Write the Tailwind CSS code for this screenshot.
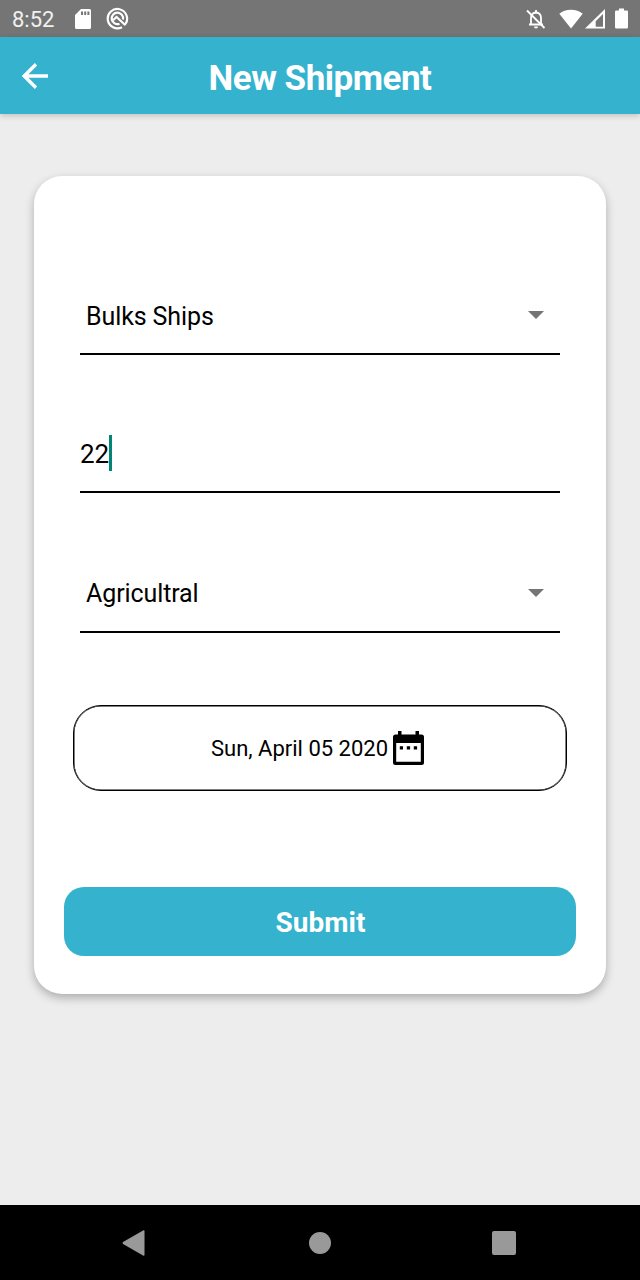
<!DOCTYPE html>
<html lang="en">
<head>
    <meta charset="UTF-8">
    <meta name="viewport" content="width=device-width, initial-scale=1.0">
    <title>New Shipment</title>
    <script src="https://cdn.jsdelivr.net/npm/@tailwindcss/browser@4"></script>
</head>
<body class="bg-[#ededed] font-[Roboto,sans-serif] text-black">

    <div class="flex flex-col w-[640px] h-[1280px] overflow-hidden">

        <!-- Status bar -->
        <div class="flex items-center justify-between h-[37px] shrink-0 bg-[#757575] pl-3 pr-3 text-white">
            <div class="flex items-center">
                <span class="w-[63px] text-[22px] leading-[37px] pt-[2px] text-white/90">8:52</span>
                <svg class="w-[16px] h-[20px] mr-[15px]" viewBox="0 0 16 20" fill="currentColor">
                    <path fill-rule="evenodd" d="M6 0h8.500Q16 0 16 1.500v17Q16 20 14.500 20h-13Q0 20 0 18.500V6zM6 2.500v3.500h2V2.500zm3.200 0v3.500h2V2.500zm3.200 0v3.500h2V2.500z"/>
                </svg>
                <svg class="w-[23px] h-[23px]" viewBox="0 0 23 23" fill="none" stroke="currentColor" stroke-width="2.200">
                    <path d="M16 20.200A9.700 9.700 0 1 1 19.500 17"/>
                    <path d="M13.500 16.700A5.700 5.700 0 1 1 17 12.500"/>
                    <path d="M7 13.200l3.500-3.200 9 8.300"/>
                </svg>
            </div>
            <div class="flex items-center">
                <svg class="w-[20px] h-[20px] mr-[13px]" viewBox="0 0 20 20" fill="none" stroke="currentColor" stroke-width="1.800">
                    <path d="M5 15V9q0-5 5-5.500q5 .5 5 5.500v6M3 15.500h14M10 1v3"/>
                    <path d="M8 17.500h4a2 2 0 0 1-4 0z" fill="currentColor" stroke="none"/>
                    <path d="M1 1.500l17.500 17.500"/>
                </svg>
                <svg class="w-[24px] h-[20px] mr-[2px]" viewBox="0 0 24 20" fill="currentColor">
                    <path d="M12 19.500L.3 4.800Q5 .8 12 .8t11.700 4z"/>
                </svg>
                <svg class="w-[20px] h-[20px] mr-[10px]" viewBox="0 0 20 20" fill="currentColor">
                    <path fill-rule="evenodd" d="M20 0v19.500H0zM18 5l-7.300 7.200v5.500H18z"/>
                </svg>
                <svg class="w-[13px] h-[21px]" viewBox="0 0 13 21" fill="currentColor">
                    <path d="M4 .500h5v2h2.800q1.200 0 1.200 1.200v15.500q0 1.300-1.200 1.300H1.200Q0 20.500 0 19.200V3.700Q0 2.500 1.200 2.500H4z"/>
                </svg>
            </div>
        </div>

        <!-- App bar -->
        <div class="grid grid-cols-[80px_1fr_80px] items-center h-[77px] shrink-0 bg-[#34b2ce] text-white shadow-[0_2px_6px_rgba(0,0,0,0.18)]">
            <svg class="w-[26px] h-[26px] ml-[22px]" viewBox="0 0 26 26" fill="none" stroke="currentColor" stroke-width="3.400">
                <path d="M26 13H3M14 1.200L2.200 13 14 24.800"/>
            </svg>
            <h1 class="text-center font-bold text-[35px] leading-none tracking-[-0.5px] pt-[5px]">New Shipment</h1>
        </div>

        <!-- Form -->
        <div class="flex-1 pt-[62px] px-[34px]">
            <div class="h-[818px] rounded-[28px] bg-white px-[30px] pt-[101px] shadow-[0_4px_10px_rgba(0,0,0,0.27)]">
                <div class="flex items-center justify-between h-[78px] mx-4 pl-[6px] pr-4 border-b-2">
                    <span class="pt-[3px] text-[25px] tracking-[-0.1px]">Bulks Ships</span>
                    <svg class="w-4 h-2" viewBox="0 0 16 8" fill="#757575"><path d="M0 0h16L8 8z"/></svg>
                </div>
                <div class="flex items-center h-[78px] mx-4 mt-[60px] border-b-2">
                    <span class="pt-[2px] text-[26px]">22</span>
                    <span class="w-[3px] h-9 bg-[#008577]"></span>
                </div>
                <div class="flex items-center justify-between h-[78px] mx-4 mt-[62px] pl-[6px] pr-4 border-b-2">
                    <span class="pt-[2px] text-[25px] tracking-[-0.1px]">Agricultral</span>
                    <svg class="w-4 h-2" viewBox="0 0 16 8" fill="#757575"><path d="M0 0h16L8 8z"/></svg>
                </div>
                <div class="flex items-center justify-center h-[86px] mx-[9px] mt-[72px] pr-[5px] border shadow-[inset_0_0_0_0.5px_#000] rounded-[28px]">
                    <span class="text-[22px]">Sun, April 05 2020</span>
                    <svg class="w-[31px] h-[34px] ml-[5px]" viewBox="0 0 31 34">
                        <path fill-rule="evenodd" d="M5 0h3.500v3.500h14V0H26v3.500h2.500Q31 3.500 31 6v25.500q0 2.500-2.500 2.500h-26Q0 34 0 31.500V6q0-2.500 2.500-2.500H5zM3.200 12v18.700h24.600V12z"/>
                        <path d="M6.800 15.300H10v3.300H6.800zm7 0h3.300v3.300h-3.300zm7 0h3.300v3.300h-3.300z"/>
                    </svg>
                </div>
                <button class="block w-[512px] h-[69px] mt-[96px] pt-[2px] pl-px rounded-[20px] bg-[#34b2ce] text-white font-bold text-[28px]">Submit</button>
            </div>
        </div>

        <!-- Navigation bar -->
        <div class="flex items-center h-[75px] shrink-0 bg-black pl-[122px]">
            <svg class="w-[23px] h-[26px]" viewBox="0 0 23 26" fill="#999"><path d="M21.500.3Q22.500 0 22.500 1.200v23.600q0 1.200-1 .9L1 14Q0 13 1 12z"/></svg>
            <div class="size-[22px] ml-[164px] rounded-full bg-[#999]"></div>
            <div class="size-[24px] ml-[161px] rounded-[2px] bg-[#999]"></div>
        </div>
    </div>

</body>
</html>
